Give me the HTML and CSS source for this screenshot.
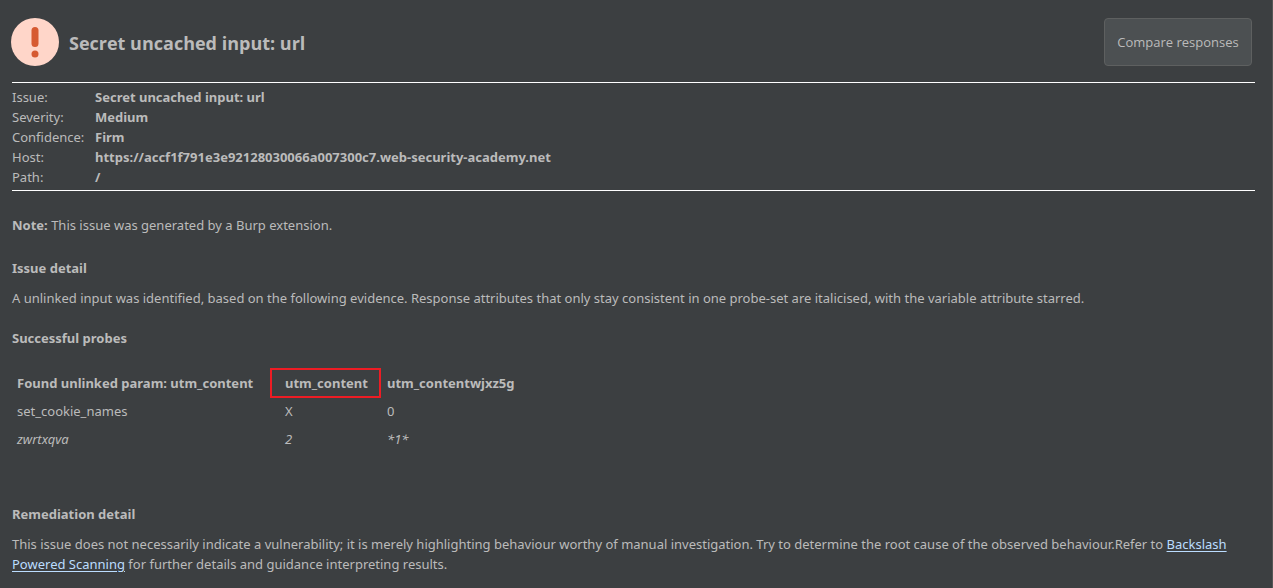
FILE: index.html
```html
<!DOCTYPE html>
<html lang="en">
<head>
<meta charset="utf-8">
<title>Secret uncached input: url</title>
<link rel="stylesheet" href="styles.css">
</head>
<body>
<main class="advisory">
  <header class="advisory-header">
    <svg class="severity-icon" viewBox="0 0 48 48" aria-hidden="true">
      <circle cx="24" cy="24" r="24" fill="#ffd6c9"/>
      <rect x="20.5" y="9" width="7" height="20" rx="3.5" fill="#d65a31"/>
      <circle cx="24" cy="36" r="3.5" fill="#d65a31"/>
    </svg>
    <h1 class="title">Secret uncached input: url</h1>
    <button class="compare" type="button">Compare responses</button>
  </header>
  <dl class="summary">
    <dt>Issue:</dt><dd>Secret uncached input: url</dd>
    <dt>Severity:</dt><dd>Medium</dd>
    <dt>Confidence:</dt><dd>Firm</dd>
    <dt>Host:</dt><dd>https://accf1f791e3e92128030066a007300c7.web-security-academy.net</dd>
    <dt>Path:</dt><dd>/</dd>
  </dl>
  <p class="note"><b>Note:</b> This issue was generated by a Burp extension.</p>
  <h2 class="heading">Issue detail</h2>
  <p class="text">A unlinked input was identified, based on the following evidence. Response attributes that only stay consistent in one probe-set are italicised, with the variable attribute starred.</p>
  <h2 class="heading">Successful probes</h2>
  <table class="probes">
    <thead>
      <tr><th class="col-name">Found unlinked param: utm_content</th><th class="col-probe"><span class="marked">utm_content</span></th><th>utm_contentwjxz5g</th></tr>
    </thead>
    <tbody>
      <tr><td>set_cookie_names</td><td>X</td><td>0</td></tr>
      <tr class="variable"><td>zwrtxqva</td><td>2</td><td>*1*</td></tr>
    </tbody>
  </table>
  <h2 class="heading">Remediation detail</h2>
  <p class="text">This issue does not necessarily indicate a vulnerability; it is merely highlighting behaviour worthy of manual investigation. Try to determine the root cause of the observed behaviour.Refer to <a class="link" href="#">Backslash Powered Scanning</a> for further details and guidance interpreting results.</p>
</main>
</body>
</html>
```
FILE: styles.css
```css
* { box-sizing: border-box; }
body {
  margin: 0;
  min-height: 100vh;
  background: #3c3f41;
  color: #bbbbbb;
  font: 13px/20px "Noto Sans", "Open Sans", sans-serif;
  border-right: 1px solid #555555;
}
.advisory { padding: 18px 17px 0 12px; }
.advisory-header {
  display: flex;
  align-items: center;
  gap: 10px;
  margin: 0 3px 16px -1px;
}
.severity-icon { width: 48px; height: 48px; flex: none; }
.title { margin: 0; flex: 1; font: 700 18px/24px "Open Sans", sans-serif; padding-top: 2px; }
.compare {
  height: 48px;
  min-width: 148px;
  padding: 0 12px;
  border: 1px solid #5e6060;
  border-radius: 4px;
  background: #4c5052;
  color: #bbbbbb;
  font: 13px/20px "Open Sans", sans-serif;
}
.summary {
  display: grid;
  grid-template-columns: 83px 1fr;
  margin: 0;
  padding: 4px 0 3px;
  border-top: 1px solid #ffffff;
  border-bottom: 1px solid #ffffff;
}
.summary dt, .summary dd { margin: 0; }
.summary dd, .note b, .heading, .probes th { font-weight: 700; }
.note { margin: 24px 0 23px; }
.heading { margin: 0 0 10px; font-size: 13px; line-height: 20px; }
.text { margin: 0 0 20px; }
.probes { margin: 21px 0 51px; border-collapse: collapse; }
.probes th, .probes td { padding: 4px 5px; text-align: left; }
.probes .col-name { width: 268px; }
.probes .col-probe { width: 102px; }
.marked { position: relative; }
.marked::after {
  content: "";
  position: absolute;
  inset: -6px -13px -6px -15px;
  border: 2px solid #ed1c24;
}
.variable { font-style: italic; }
.link { color: #bbddff; text-underline-offset: 2px; }
```
